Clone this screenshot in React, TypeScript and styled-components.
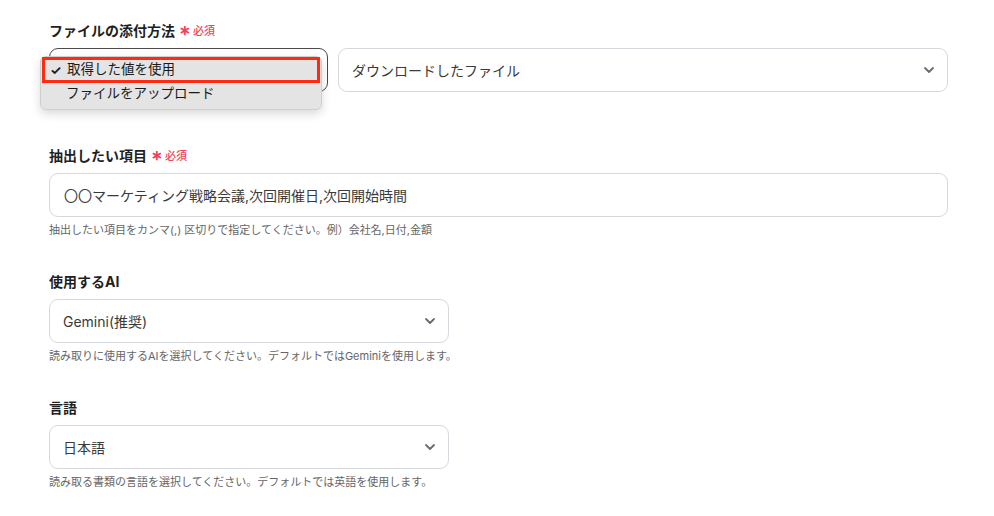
import React from "react";
import styled, { createGlobalStyle } from "styled-components";

const GlobalStyle = createGlobalStyle`
  * { box-sizing: border-box; }
  body {
    margin: 0;
    background: #ffffff;
    font-family: Inter, "Noto Sans CJK JP", "Noto Sans", sans-serif;
    color: #222;
  }
`;

const Page = styled.div`
  width: 994px;
  height: 516px;
  padding: 20px 46px 0 49px;
  display: flex;
  flex-direction: column;
  overflow: hidden;
`;

const Field = styled.div<{ $gap?: number }>`
  display: flex;
  flex-direction: column;
  margin-bottom: ${(p) => p.$gap ?? 0}px;
`;

const Label = styled.div`
  display: flex;
  align-items: center;
  height: 20px;
  font-size: 14px;
  font-weight: 700;
  color: #1f1f1f;
  margin-bottom: 8px;
`;

const Required = styled.span`
  display: inline-flex;
  align-items: center;
  margin-left: 4px;
  font-size: 11px;
  font-weight: 500;
  color: #f0425c;
  gap: 2px;

  &::before {
    content: "∗";
    font-size: 14px;
    font-weight: 700;
    line-height: 1;
  }
`;

const Row = styled.div`
  display: flex;
  gap: 10px;
`;

const SelectWrap = styled.div<{ $width?: number }>`
  position: relative;
  ${(p) => (p.$width ? `width: ${p.$width}px; flex: none;` : "flex: 1;")}
`;

const SelectBox = styled.div<{ $active?: boolean }>`
  height: 44px;
  border: 1px solid ${(p) => (p.$active ? "#4a4a4a" : "#d6d8dd")};
  border-radius: 9px;
  display: flex;
  align-items: center;
  justify-content: space-between;
  padding: 0 12px 0 13px;
  font-size: 14px;
  color: #3a3a3a;
  background: #fff;
`;

const Chevron = () => (
  <svg width="12" height="8" viewBox="0 0 12 8" fill="none">
    <path d="M2 2l4 4 4-4" stroke="#6b6b6b" strokeWidth="1.8" strokeLinecap="round" strokeLinejoin="round" />
  </svg>
);

const Menu = styled.div`
  position: absolute;
  left: -9px;
  top: 8px;
  width: 282px;
  padding: 0 1px 4px;
  background: #e4e4e4;
  border: 1px solid #cfcfcf;
  border-radius: 6px;
  box-shadow: 0 4px 10px rgba(0, 0, 0, 0.15);
  z-index: 2;
`;

const MenuItem = styled.div<{ $selected?: boolean }>`
  height: ${(p) => (p.$selected ? "26px" : "22px")};
  display: flex;
  align-items: center;
  padding-left: ${(p) => (p.$selected ? "5px" : "24px")};
  font-size: 13.5px;
  line-height: 1;
  color: #1a1a1a;
  border: ${(p) => (p.$selected ? "3px solid #ff2a12" : "none")};
`;

const Check = styled.span`
  width: 17px;
  font-size: 13px;
  font-weight: 700;
`;

const TextInput = styled.div`
  height: 44px;
  border: 1px solid #d6d8dd;
  border-radius: 9px;
  display: flex;
  align-items: center;
  padding: 0 14px;
  font-size: 14px;
  color: #3a3a3a;
`;

const Help = styled.div`
  margin-top: 6px;
  font-size: 11px;
  color: #666;
  height: 14px;
  line-height: 14px;
`;

const NarrowSelect = styled(SelectWrap)`
  width: 400px;
  flex: none;
`;

export default function App() {
  return (
    <>
      <GlobalStyle />
      <Page>
        <Field $gap={53}>
          <Label>
            ファイルの添付方法<Required>必須</Required>
          </Label>
          <Row>
            <SelectWrap $width={279}>
              <SelectBox $active />
              <Menu>
                <MenuItem $selected>
                  <Check>✓</Check>取得した値を使用
                </MenuItem>
                <MenuItem>ファイルをアップロード</MenuItem>
              </Menu>
            </SelectWrap>
            <SelectWrap>
              <SelectBox>
                ダウンロードしたファイル
                <Chevron />
              </SelectBox>
            </SelectWrap>
          </Row>
        </Field>

        <Field $gap={34}>
          <Label>
            抽出したい項目<Required>必須</Required>
          </Label>
          <TextInput>〇〇マーケティング戦略会議,次回開催日,次回開始時間</TextInput>
          <Help>抽出したい項目をカンマ(,) 区切りで指定してください。例）会社名,日付,金額</Help>
        </Field>

        <Field $gap={34}>
          <Label>使用するAI</Label>
          <NarrowSelect>
            <SelectBox>
              Gemini(推奨)
              <Chevron />
            </SelectBox>
          </NarrowSelect>
          <Help>読み取りに使用するAIを選択してください。デフォルトではGeminiを使用します。</Help>
        </Field>

        <Field>
          <Label>言語</Label>
          <NarrowSelect>
            <SelectBox>
              日本語
              <Chevron />
            </SelectBox>
          </NarrowSelect>
          <Help>読み取る書類の言語を選択してください。デフォルトでは英語を使用します。</Help>
        </Field>
      </Page>
    </>
  );
}
